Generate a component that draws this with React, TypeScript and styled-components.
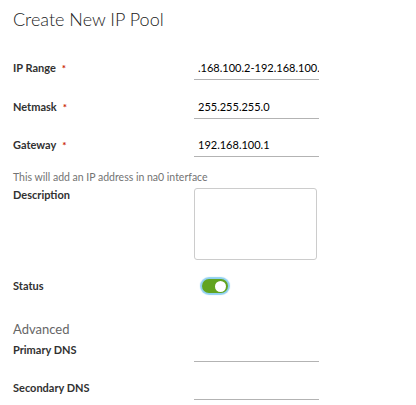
import React from "react";
import styled, { createGlobalStyle } from "styled-components";

const GlobalStyle = createGlobalStyle`
  html, body {
    margin: 0;
    padding: 0;
    background: #ffffff;
    font-family: Lato, "Open Sans", "Liberation Sans", sans-serif;
  }
`;

const Page = styled.div`
  width: 416px;
  height: 405px;
  padding: 7px 0 0 13px;
  box-sizing: border-box;
  overflow: hidden;
`;

const Title = styled.h3`
  margin: 0;
  font-size: 18px;
  line-height: 24px;
  font-weight: 300;
  color: #222;
`;

const Row = styled.div<{ top: number; align?: string }>`
  display: grid;
  grid-template-columns: 181px 125px;
  align-items: ${(p) => p.align || "center"};
  margin-top: ${(p) => p.top}px;
`;

const Label = styled.label`
  font-size: 11px;
  line-height: 14px;
  font-weight: 700;
  color: #313131;
`;

const Required = styled.span`
  color: #c92100;
  margin-left: 6px;
  font-size: 10px;
  vertical-align: top;
`;

const TextInput = styled.div`
  height: 23px;
  border-bottom: 1px solid #b3b3b3;
  font-size: 11px;
  line-height: 24px;
  color: #000;
  padding-left: 4px;
  white-space: nowrap;
  overflow: hidden;
`;

const Hint = styled.div`
  margin-top: 14px;
  font-size: 10.5px;
  line-height: 12px;
  color: #737373;
`;

const TextArea = styled.div`
  width: 121px;
  height: 70px;
  border: 1px solid #ccc;
  border-radius: 3px;
`;

const Toggle = styled.div<{ on: boolean }>`
  margin-left: 8px;
  width: 26px;
  height: 14px;
  border-radius: 7px;
  background: ${(p) => (p.on ? "#62a420" : "#ccc")};
  box-shadow: 0 0 1px 2px #8fd0f0;
  display: flex;
  align-items: center;
  justify-content: ${(p) => (p.on ? "flex-end" : "flex-start")};
  padding: 0 2px;
  box-sizing: border-box;
`;

const Knob = styled.span`
  width: 11px;
  height: 11px;
  border-radius: 50%;
  background: #fff;
`;

const Section = styled.h4`
  margin: 28px 0 0;
  font-size: 13px;
  line-height: 16px;
  font-weight: 400;
  color: #666;
`;

const fields = [
  { label: "IP Range", value: ".168.100.2-192.168.100.", top: 25 },
  { label: "Netmask", value: "255.255.255.0", top: 15 },
  { label: "Gateway", value: "192.168.100.1", top: 14 },
];

export default function App() {
  return (
    <Page>
      <GlobalStyle />
      <Title>Create New IP Pool</Title>
      {fields.map((f) => (
        <Row key={f.label} top={f.top}>
          <Label>
            {f.label}
            <Required>*</Required>
          </Label>
          <TextInput>{f.value}</TextInput>
        </Row>
      ))}
      <Hint>This will add an IP address in na0 interface</Hint>
      <Row top={5} align="start">
        <Label>Description</Label>
        <TextArea />
      </Row>
      <Row top={19}>
        <Label>Status</Label>
        <Toggle on>
          <Knob />
        </Toggle>
      </Row>
      <Section>Advanced</Section>
      <Row top={1}>
        <Label>Primary DNS</Label>
        <TextInput />
      </Row>
      <Row top={14}>
        <Label>Secondary DNS</Label>
        <TextInput />
      </Row>
    </Page>
  );
}
